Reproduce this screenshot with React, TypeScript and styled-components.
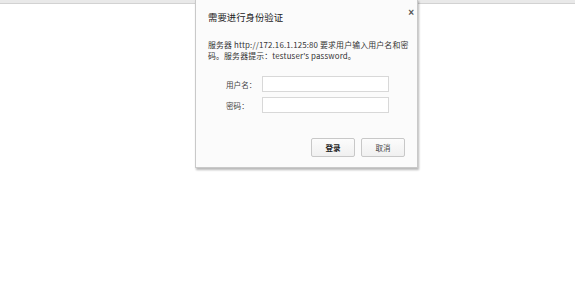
import React from "react";
import styled, { createGlobalStyle } from "styled-components";

const GlobalStyle = createGlobalStyle`
  html, body {
    margin: 0;
    padding: 0;
    background: #ffffff;
    font-family: "Liberation Sans", "Noto Sans CJK SC", sans-serif;
  }
`;

const Page = styled.div`
  position: relative;
  width: 575px;
  height: 281px;
  overflow: hidden;
  background: #ffffff;
`;

const TopStrip = styled.div`
  height: 3px;
  background: #e9e9e9;
  border-bottom: 1px solid #d2d2d2;
`;

const Dialog = styled.div`
  position: absolute;
  left: 195px;
  top: -1px;
  width: 223px;
  height: 169px;
  box-sizing: border-box;
  background: #fbfbfb;
  border: 1px solid #c9c9c9;
  box-shadow: 1px 2px 2px rgba(0, 0, 0, 0.28);
  display: flex;
  flex-direction: column;
  padding: 10px 12px 0 12px;
  font-family: "Noto Sans CJK SC", "Liberation Sans", sans-serif;
  color: #333;
`;

const TitleRow = styled.div`
  display: flex;
  justify-content: space-between;
  align-items: flex-start;
  height: 18px;
`;

const Title = styled.div`
  font-size: 9.4px;
  line-height: 12px;
  margin-top: 1px;
  color: #222;
`;

const Close = styled.div`
  font-family: "Liberation Sans", sans-serif;
  font-size: 10px;
  font-weight: bold;
  line-height: 10px;
  color: #555;
  margin-top: -2px;
  margin-right: -9px;
`;

const Message = styled.div`
  margin-top: 11px;
  font-size: 7.9px;
  letter-spacing: 0.15px;
  line-height: 11px;
  color: #333;
  white-space: nowrap;
`;

const Form = styled.div`
  margin-top: 15px;
  margin-left: 18px;
  display: grid;
  grid-template-columns: 36px 127px;
  row-gap: 5px;
  align-items: center;
`;

const Label = styled.div`
  font-size: 7.6px;
  color: #444;
`;

const Field = styled.div`
  height: 16px;
  box-sizing: border-box;
  background: #ffffff;
  border: 1px solid #d8d8d8;
`;

const Buttons = styled.div`
  margin-top: 25px;
  display: flex;
  justify-content: flex-end;
  gap: 6px;
`;

const Button = styled.div<{ $primary?: boolean }>`
  width: 44px;
  height: 19px;
  box-sizing: border-box;
  border: 1px solid #c8c8c8;
  border-radius: 2px;
  background: linear-gradient(#fcfcfc, #f0f0f0);
  display: flex;
  align-items: center;
  justify-content: center;
  font-size: 7.5px;
  color: ${({ $primary }) => ($primary ? "#222" : "#444")};
  font-weight: ${({ $primary }) => ($primary ? 700 : 400)};
`;

export default function App() {
  return (
    <>
      <GlobalStyle />
      <Page>
        <TopStrip />
        <Dialog>
          <TitleRow>
            <Title>需要进行身份验证</Title>
            <Close>×</Close>
          </TitleRow>
          <Message>
            服务器 http://172.16.1.125:80 要求用户输入用户名和密
            <br />
            码。服务器提示：testuser's password。
          </Message>
          <Form>
            <Label>用户名：</Label>
            <Field />
            <Label>密码：</Label>
            <Field />
          </Form>
          <Buttons>
            <Button $primary>登录</Button>
            <Button>取消</Button>
          </Buttons>
        </Dialog>
      </Page>
    </>
  );
}
